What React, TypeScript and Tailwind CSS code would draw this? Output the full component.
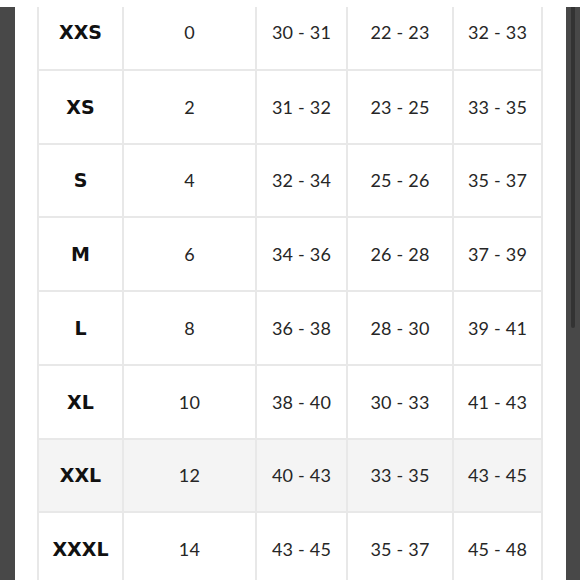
const rows = [
  { size: "XXS", us: "0", bust: "30 - 31", waist: "22 - 23", hips: "32 - 33" },
  { size: "XS", us: "2", bust: "31 - 32", waist: "23 - 25", hips: "33 - 35" },
  { size: "S", us: "4", bust: "32 - 34", waist: "25 - 26", hips: "35 - 37" },
  { size: "M", us: "6", bust: "34 - 36", waist: "26 - 28", hips: "37 - 39" },
  { size: "L", us: "8", bust: "36 - 38", waist: "28 - 30", hips: "39 - 41" },
  { size: "XL", us: "10", bust: "38 - 40", waist: "30 - 33", hips: "41 - 43" },
  { size: "XXL", us: "12", bust: "40 - 43", waist: "33 - 35", hips: "43 - 45", shaded: true },
  { size: "XXXL", us: "14", bust: "43 - 45", waist: "35 - 37", hips: "45 - 48" },
];

// row heights include the 2px bottom border
const heights = ["h-[76px]", "h-[74px]", "h-[73px]", "h-[74px]", "h-[74px]", "h-[74px]", "h-[73px]", "h-[74px]"];

const cell = "flex items-center justify-center border-r-2 border-[#e8e8e8]";
const num = "font-['Lato',sans-serif] text-[18px] tracking-[0.2px] text-[#262626]";

export default function App() {
  return (
    <div className="w-[580px] h-[580px] overflow-hidden bg-white flex flex-col">
      {/* top white strip */}
      <div className="h-[7px] shrink-0 bg-white" />

      <div className="flex flex-1 min-h-0">
        {/* left dark bar */}
        <div className="w-[15px] shrink-0 bg-[#484848]" />
        <div className="w-[22px] shrink-0" />

        {/* size table */}
        <div className="w-[506px] shrink-0 overflow-hidden">
          <div className="-mt-[12px] border-l-2 border-[#e8e8e8]">
            {rows.map((r, i) => (
              <div
                key={r.size}
                className={`grid grid-cols-[85px_133px_91px_106px_89px] border-b-2 border-[#e8e8e8] ${heights[i]} ${
                  r.shaded ? "bg-[#f4f4f4]" : "bg-white"
                }`}
              >
                <div className={cell}>
                  <span className="font-['DejaVu_Sans',sans-serif] font-bold text-[19px] text-[#111]">
                    {r.size}
                  </span>
                </div>
                <div className={cell}>
                  <span className={num}>{r.us}</span>
                </div>
                <div className={cell}>
                  <span className={num}>{r.bust}</span>
                </div>
                <div className={cell}>
                  <span className={num}>{r.waist}</span>
                </div>
                <div className={cell}>
                  <span className={num}>{r.hips}</span>
                </div>
              </div>
            ))}
          </div>
        </div>

        <div className="w-[23px] shrink-0" />

        {/* right dark bar with scrollbar thumb */}
        <div className="w-[14px] shrink-0 bg-[#484848] flex pl-[5px]">
          <div className="w-[4px] h-[321px] rounded-b-full bg-[#333333]" />
        </div>
      </div>
    </div>
  );
}
